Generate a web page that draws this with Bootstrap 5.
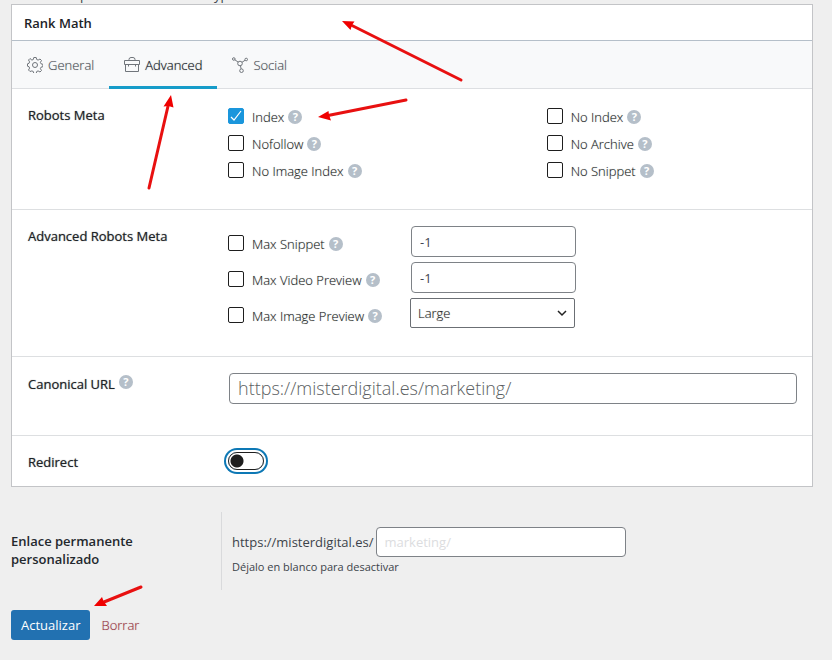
<!DOCTYPE html>
<html lang="es">
<head>
<meta charset="utf-8">
<meta name="viewport" content="width=device-width, initial-scale=1">
<title>Rank Math</title>
<link href="https://cdn.jsdelivr.net/npm/bootstrap@5.3.0/dist/css/bootstrap.min.css" rel="stylesheet">
<style>
body{background:#efefef;font:400 13px/18px "Open Sans","Noto Sans",sans-serif;color:#3c434a;overflow-x:hidden}
.page-wrap{padding:0 19px 16px 11px}
.prev-line{height:4px;overflow:hidden;padding-left:69px;gap:126px}
.prev-line span{margin-top:-14px;height:18px}
.panel{border-color:#c3c4c7;border-radius:0;color:inherit}
.panel-title{font-size:13px;line-height:18px;font-weight:600;color:#1d2327;padding:9px 12px 8px;border-bottom:1px solid #b5bfc9}
.seo-tabs{background:#f8f9fa;border-bottom:1px solid #dddfe2}
.seo-tabs .nav-link{display:flex;align-items:center;gap:5px;height:48px;padding:3px 15px 0;border-radius:0;color:#454b52;font-weight:300;text-shadow:0 0 1px rgba(69,75,82,.4);border-bottom:3px solid transparent;margin-bottom:-1px}
.seo-tabs .nav-link.active{color:#0d1217;text-shadow:0 0 1px rgba(13,18,23,.5);border-bottom-color:#169cc9;background:none}
.seo-tabs svg{width:16px;height:16px;fill:none;stroke:#70757b;stroke-width:1}
.set-row{display:flex;padding:17px 15px 0 16px;border-bottom:1px solid #dddfe1}
.set-row:last-child{border-bottom:0}
.set-label{width:200px;flex:none;color:#1d2327;text-shadow:0 0 1px rgba(29,35,39,.6)}
.r-robots{min-height:121px}.r-adv{min-height:147px}.r-canon{min-height:79px;padding-top:16px}.r-redir{min-height:50px}
.r-canon .set-label{padding-top:2px}
.opt-grid{display:grid;grid-template-columns:56% 44%;row-gap:9px;align-content:start;padding-top:2px}
.opt{display:flex;align-items:center;height:18px;font-weight:300;color:#161b20}
.opt label{text-shadow:0 0 1px rgba(22,27,32,.35)}
.adv-grid{display:grid;grid-template-columns:183px 165px;row-gap:5px;align-content:start;margin-top:-1px}
.adv-grid .opt{height:31px;padding-top:5px}
.tick{appearance:none;width:16px;height:16px;border:1px solid #1e1e1e;border-radius:2px;background:#fff;margin:0 8px 3px 0;flex:none}
.tick:checked{border-color:#1a96dc;background:#1a96dc url("data:image/svg+xml,%3Csvg xmlns='http://www.w3.org/2000/svg' viewBox='0 0 14 14'%3E%3Cpath d='M2 8l3 3 7-9' fill='none' stroke='white' stroke-width='1.2'/%3E%3C/svg%3E") center/14px}
.help{display:inline-flex;align-items:center;justify-content:center;width:14px;height:14px;border-radius:50%;background:#b5bfc9;color:#fff;font-size:11px;line-height:14px;font-weight:700;margin-left:4px;flex:none;text-shadow:none}
.box{border:1px solid #7e8287;border-radius:4px;color:#3f4650;background-color:#fff;font-size:13px;line-height:18px;height:31px;padding:0 8px;min-width:0}
.box.form-select{height:30px;color:#1e1e1e;border-radius:2px;border-color:#6b6f74;padding:0 24px 0 7px;margin-left:-1px;font-weight:300;text-shadow:0 0 1px rgba(30,30,30,.4);background-size:10px;background-position:right 7px center;background-image:url("data:image/svg+xml,%3Csvg xmlns='http://www.w3.org/2000/svg' viewBox='0 0 10 10'%3E%3Cpath d='M1 3l4 4 4-4' fill='none' stroke='%23222' stroke-width='1.5'/%3E%3C/svg%3E")}
.url-wrap{padding-left:1px}
.box.url-box{font-size:18px;font-weight:300;padding-bottom:2px}
.url-box::placeholder{color:#5c5f63}
.slug-line{gap:2px}
.slug-box{width:250px;height:30px}
.slug-box::placeholder{color:#dcdde0}
.switch{appearance:none;display:block;width:36px;height:18px;border:1px solid #1e1e1e;border-radius:9px;box-shadow:0 0 0 2px #fff,0 0 0 4px #0d78b5;background:radial-gradient(circle at 8px 8px,#1e1e1e 6px,#fff 7px);margin:-1px 0 0}
.permalink{padding-top:25px}
.perma-label{width:210px;flex:none;color:#23282d;font-weight:600;padding:20px 60px 0 0}
.perma-field{border-left:1px solid #d9dadc;padding:15px 0 0 10px;height:78px;flex:1}
.hint{font-size:11px;margin-top:1px}
.actions{gap:11px;padding-top:20px}
.save{background:#2271b1;color:#fff;font-size:13px;line-height:18px;height:30px;padding:0 10px;border-radius:3px;border:0}
.trash{color:#94303c;font-weight:300;text-shadow:0 0 1px rgba(148,48,60,.4)}
.arrows{position:absolute;left:0;top:0;width:832px;height:660px;pointer-events:none}
</style>
<script src="https://cdn.jsdelivr.net/npm/bootstrap@5.3.0/dist/js/bootstrap.bundle.min.js"></script>
</head>
<body>
<main class="page-wrap">
  <div class="prev-line d-flex"><span>p</span><span>yp</span></div>
  <section class="panel card">
    <h2 class="panel-title m-0">Rank Math</h2>
    <nav class="seo-tabs nav">
      <a class="nav-link" href="#"><svg viewBox="0 0 16 16"><circle cx="8" cy="8" r="2.5"/><path d="M6.8.5h2.400l.5 2 1.400.6 1.900-1.100 1.500 1.500-1.100 1.900.6 1.400 1.900.5v2.400l-1.900.5-.6 1.400 1.100 1.900-1.500 1.500-1.900-1.100-1.400.6-.5 2H6.800l-.5-2-1.400-.6L3 14.500 1.500 13l1.100-1.900L2 9.700l-1.500-.5V6.800L2 6.300l.6-1.400L1.500 3 3 1.500l1.900 1.600 1.400-.6z"/></svg>General</a>
      <a class="nav-link active" href="#" aria-current="page"><svg viewBox="0 0 16 16"><path d="M.5 3.500h15v4H.5zM1.500 7.500v7h13v-7M5 3.500v-1q0-2 2-2h2q2 0 2 2v1M4.500 7.500v2M11.500 7.500v2"/></svg>Advanced</a>
      <a class="nav-link" href="#"><svg viewBox="0 0 16 16"><circle cx="8" cy="6.500" r="2.300"/><circle cx="1.800" cy="2" r="1.300"/><circle cx="14.200" cy="2.500" r="1.300"/><circle cx="9.500" cy="13.700" r="1.800"/><path d="M2.900 2.800l3.200 2.300M10 5.300l3-2M8.500 8.800l.6 3.100"/></svg>Social</a>
    </nav>
    <div class="set-row r-robots">
      <div class="set-label">Robots Meta</div>
      <div class="opt-grid flex-grow-1">
        <div class="opt"><input class="tick" type="checkbox" id="i1" checked><label for="i1">Index</label><span class="help">?</span></div>
        <div class="opt"><input class="tick" type="checkbox" id="i2"><label for="i2">No Index</label><span class="help">?</span></div>
        <div class="opt"><input class="tick" type="checkbox" id="i3"><label for="i3">Nofollow</label><span class="help">?</span></div>
        <div class="opt"><input class="tick" type="checkbox" id="i4"><label for="i4">No Archive</label><span class="help">?</span></div>
        <div class="opt"><input class="tick" type="checkbox" id="i5"><label for="i5">No Image Index</label><span class="help">?</span></div>
        <div class="opt"><input class="tick" type="checkbox" id="i6"><label for="i6">No Snippet</label><span class="help">?</span></div>
      </div>
    </div>
    <div class="set-row r-adv">
      <div class="set-label">Advanced Robots Meta</div>
      <div class="adv-grid">
        <div class="opt"><input class="tick" type="checkbox" id="a1"><label for="a1">Max Snippet</label><span class="help">?</span></div>
        <input class="box form-control" type="text" value="-1" aria-label="Max Snippet">
        <div class="opt"><input class="tick" type="checkbox" id="a2"><label for="a2">Max Video Preview</label><span class="help">?</span></div>
        <input class="box form-control" type="text" value="-1" aria-label="Max Video Preview">
        <div class="opt"><input class="tick" type="checkbox" id="a3"><label for="a3">Max Image Preview</label><span class="help">?</span></div>
        <select class="box form-select" aria-label="Max Image Preview"><option>Large</option></select>
      </div>
    </div>
    <div class="set-row r-canon">
      <div class="set-label d-flex"><label for="canon">Canonical URL</label><span class="help">?</span></div>
      <div class="url-wrap flex-grow-1"><input class="box url-box form-control" type="url" id="canon" placeholder="https://misterdigital.es/marketing/"></div>
    </div>
    <div class="set-row r-redir">
      <label class="set-label" for="redir">Redirect</label>
      <div><input class="switch" type="checkbox" role="switch" id="redir"></div>
    </div>
  </section>
  <div class="permalink d-flex">
    <label class="perma-label" for="slug">Enlace permanente personalizado</label>
    <div class="perma-field">
      <div class="slug-line d-flex align-items-center"><span>https://misterdigital.es/</span><input class="box slug-box form-control" type="text" id="slug" placeholder="marketing/"></div>
      <div class="hint">Déjalo en blanco para desactivar</div>
    </div>
  </div>
  <div class="d-flex align-items-center actions"><button class="save" type="button">Actualizar</button><a class="trash text-decoration-none" href="#">Borrar</a></div>
</main>
<svg class="arrows" viewBox="0 0 832 660" aria-hidden="true">
  <g stroke="#e81010" stroke-width="3" stroke-linecap="round"><path d="M461 80L350 24.500"/><path d="M406 100L328 115.500"/><path d="M149 188L168.500 104"/><path d="M141 587L104 602"/></g>
  <g fill="#f00000"><path d="M342 21l12.500.5-2.500 3.500-1.500 5z"/><path d="M318 117l10.500-6 .5 4 2 5.500z"/><path d="M171 95l2.500 12.500-5-1.500-5 .5z"/><path d="M94 606l8-9 1.500 4 3.500 5z"/></g>
</svg>
</body>
</html>
